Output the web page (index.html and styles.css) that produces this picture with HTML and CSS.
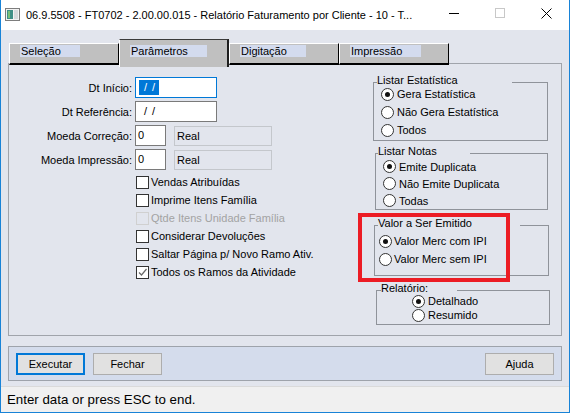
FILE: index.html
```html
<!DOCTYPE html>
<html lang="pt-BR">
<head>
    <meta charset="UTF-8">
    <title>Relatório Faturamento por Cliente</title>
    <link rel="stylesheet" href="styles.css">
</head>
<body>
    <div class="window">
        <div class="titlebar">
            <svg class="app-icon" width="15" height="13" viewBox="0 0 15 13">
                <rect x="0.5" y="0.5" width="14" height="12" fill="#f2f2f2" stroke="#7d7d7d"/>
                <rect x="2" y="2" width="6" height="9" fill="#3f8f86"/>
                <rect x="3" y="3" width="2" height="7" fill="#79bf78"/>
                <rect x="9" y="2" width="4" height="9" fill="#d6d9dc"/>
            </svg>
            <span class="title">06.9.5508 - FT0702 - 2.00.00.015 - Relatório Faturamento por Cliente - 10 - T...</span>
            <div class="caption-buttons">
                <div class="caption"><svg width="10" height="10" viewBox="0 0 10 10"><path d="M0 5.5h10" stroke="#000"/></svg></div>
                <div class="caption"><svg width="10" height="10" viewBox="0 0 10 10"><rect x="0.5" y="0.5" width="9" height="9" fill="none" stroke="#c8c8c8"/></svg></div>
                <div class="caption"><svg width="11" height="11" viewBox="0 0 11 11"><path d="M0.5 0.5l10 10M10.5 0.5l-10 10" stroke="#000"/></svg></div>
            </div>
        </div>

        <div class="client">
            <div class="tabs">
                <div class="tab"><span>Seleção</span></div>
                <div class="tab active"><span>Parâmetros</span></div>
                <div class="tab"><span>Digitação</span></div>
                <div class="tab"><span>Impressão</span></div>
            </div>

            <div class="panel">
                <div class="form">
                    <div class="field-row">
                        <label>Dt Início:</label>
                        <div class="input date focused"><span class="sel">/ /</span></div>
                    </div>
                    <div class="field-row">
                        <label>Dt Referência:</label>
                        <div class="input date"><span class="mask">/ /</span></div>
                    </div>
                    <div class="field-row">
                        <label>Moeda Correção:</label>
                        <div class="input code">0</div>
                        <div class="readonly">Real</div>
                    </div>
                    <div class="field-row">
                        <label>Moeda Impressão:</label>
                        <div class="input code">0</div>
                        <div class="readonly">Real</div>
                    </div>

                    <div class="checks">
                        <div class="check-item"><span class="box"></span>Vendas Atribuídas</div>
                        <div class="check-item"><span class="box"></span>Imprime Itens Família</div>
                        <div class="check-item disabled"><span class="box"></span>Qtde Itens Unidade Família</div>
                        <div class="check-item"><span class="box"></span>Considerar Devoluções</div>
                        <div class="check-item"><span class="box"></span>Saltar Página p/ Novo Ramo Ativ.</div>
                        <div class="check-item"><span class="box"><svg width="11" height="11" viewBox="0 0 11 11"><path d="M2 5.5l2.5 2.5 5-6" fill="none" stroke="#6a6a6a" stroke-width="1.2"/></svg></span>Todos os Ramos da Atividade</div>
                    </div>
                </div>

                <div class="side">
                    <fieldset class="group g-stat">
                        <legend>Listar Estatística</legend>
                        <div class="opts">
                            <div class="opt"><span class="radio on"></span>Gera Estatística</div>
                            <div class="opt"><span class="radio"></span>Não Gera Estatística</div>
                            <div class="opt"><span class="radio"></span>Todos</div>
                        </div>
                    </fieldset>
                    <fieldset class="group g-notas">
                        <legend>Listar Notas</legend>
                        <div class="opts">
                            <div class="opt"><span class="radio on"></span>Emite Duplicata</div>
                            <div class="opt"><span class="radio"></span>Não Emite Duplicata</div>
                            <div class="opt"><span class="radio"></span>Todas</div>
                        </div>
                    </fieldset>
                    <fieldset class="group g-valor">
                        <legend>Valor a Ser Emitido</legend>
                        <div class="opts">
                            <div class="opt"><span class="radio on"></span>Valor Merc com IPI</div>
                            <div class="opt"><span class="radio"></span>Valor Merc sem IPI</div>
                        </div>
                    </fieldset>
                    <fieldset class="group g-rel">
                        <legend>Relatório:</legend>
                        <div class="opts">
                            <div class="opt"><span class="radio on"></span>Detalhado</div>
                            <div class="opt"><span class="radio"></span>Resumido</div>
                        </div>
                    </fieldset>
                </div>

                <div class="highlight"></div>
            </div>

            <div class="buttonbar">
                <button class="btn default">Executar</button>
                <button class="btn">Fechar</button>
                <button class="btn help">Ajuda</button>
            </div>
        </div>

        <div class="statusbar">Enter data or press ESC to end.</div>
    </div>
</body>
</html>
```

FILE: styles.css
```css
body {
    margin: 0;
    font-family: "Liberation Sans", Arial, sans-serif;
    font-size: 11px;
    color: #000;
    background: #fff;
}

.window {
    width: 570px;
    height: 413px;
    box-sizing: border-box;
    border: 1px solid #1883d7;
    border-top: none;
    display: flex;
    flex-direction: column;
    background: #e2e5ed;
}

/* title bar */
.titlebar {
    height: 30px;
    flex-shrink: 0;
    background: #fff;
    display: flex;
    align-items: center;
}

.app-icon {
    margin-left: 4px;
    margin-top: -2px;
}

.title {
    margin-left: 6px;
    white-space: nowrap;
    flex: 1;
    margin-top: -1px;
}

.caption-buttons {
    display: flex;
    align-self: flex-start;
}

.caption {
    width: 46px;
    height: 26px;
    display: flex;
    align-items: center;
    justify-content: center;
}

/* client area */
.client {
    padding: 9px 7px 0;
    height: 351px;
}

.tabs {
    display: flex;
    height: 24px;
    position: relative;
    z-index: 1;
}

.tab {
    width: 110px;
    height: 22px;
    margin-top: 4px;
    box-sizing: border-box;
    background: #c0c0c0;
    border-top: 1px solid #fff;
    border-left: 1px solid #fff;
    border-right: 1px solid #000;
    border-bottom: 2px solid #000;
    padding: 1px 0 0 10px;
    white-space: nowrap;
}

.tab:first-child {
    margin-left: 1px;
}

.tab.active {
    margin-top: 0;
    height: 28px;
    border-top: 1px solid #3a3a3a;
    border-right: 2px solid #1e1e1e;
    border-bottom: none;
    padding-top: 5px;
}

.tab span {
    display: inline-block;
    line-height: 12px;
    background: #d3dbee;
    padding: 0 19px 0 1px;
}

.panel {
    position: relative;
    height: 273px;
    box-sizing: border-box;
    border: 1px solid #a0a4ab;
    display: flex;
}

/* left form */
.form {
    width: 356px;
    padding-top: 13px;
}

.field-row {
    display: flex;
    align-items: center;
    height: 21px;
    margin-bottom: 3px;
}

.field-row label {
    width: 123px;
    margin-right: 3px;
    text-align: right;
    white-space: nowrap;
}

.input {
    height: 21px;
    box-sizing: border-box;
    border: 1px solid #7a7a7a;
    background: #fff;
    padding-left: 2px;
    line-height: 19px;
    white-space: pre;
    overflow: hidden;
}

.input.date {
    width: 82px;
}

.input.focused {
    border-color: #0078d7;
    padding-left: 3px;
}

.input.code {
    width: 31px;
}

.sel {
    display: inline-block;
    width: 20px;
    height: 15px;
    line-height: 15px;
    margin-top: 2px;
    vertical-align: top;
    box-sizing: border-box;
    padding-left: 5px;
    letter-spacing: 1px;
    background: #0078d7;
    color: #fff;
}

.mask {
    padding-left: 6px;
    letter-spacing: 1px;
}

.readonly {
    width: 98px;
    height: 20px;
    margin-left: 8px;
    box-sizing: border-box;
    border: 1px solid #c4c7cc;
    background: #e2e5ed;
    padding-left: 2px;
    line-height: 18px;
}

.checks {
    padding-left: 127px;
}

.check-item {
    display: flex;
    align-items: center;
    height: 18px;
    white-space: nowrap;
}

.box {
    width: 13px;
    height: 13px;
    box-sizing: border-box;
    border: 1px solid #333;
    background: #fff;
    margin-right: 2px;
    display: flex;
    align-items: center;
    justify-content: center;
}

.check-item.disabled {
    color: #a3a3a3;
}

.check-item.disabled .box {
    border-color: #d0d0d0;
    background: transparent;
}

/* right side groups */
.side {
    width: 178px;
    margin-left: 8px;
    padding-top: 9px;
}

.group {
    margin: 0;
    padding: 0;
    min-width: 0;
    border: 1px solid #8f939a;
}

.group legend {
    padding: 0 0 4px 0;
    line-height: 14px;
    box-sizing: border-box;
    white-space: nowrap;
}

.opt {
    display: flex;
    align-items: center;
    height: 18px;
    white-space: nowrap;
}

.radio {
    width: 13px;
    height: 13px;
    box-sizing: border-box;
    border: 1px solid #333;
    border-radius: 50%;
    background: #fff;
    margin-right: 3px;
    display: flex;
    align-items: center;
    justify-content: center;
}

.radio.on::after {
    content: "";
    width: 5px;
    height: 5px;
    border-radius: 50%;
    background: #111;
}

.g-stat {
    width: 173px;
    padding-bottom: 1px;
}

.g-stat legend {
    margin-left: 3px;
    width: 135px;
}

.g-stat .opts {
    margin-top: -6px;
    padding-left: 7px;
}

.g-notas {
    width: 171px;
    margin: 3px 0 0 2px;
}

.g-notas legend {
    margin-left: 2px;
    width: 92px;
}

.g-notas .opts {
    margin-top: -4px;
    padding-left: 7px;
}

.g-notas .opt {
    height: 17px;
}

.g-valor {
    width: 173px;
    margin: 6px 0 0 1px;
    padding-bottom: 7px;
}

.g-valor legend {
    margin-left: 3px;
    width: 142px;
}

.g-valor .opts {
    margin-top: -2px;
    padding-left: 4px;
}

.g-valor .radio {
    margin-right: 2px;
}

.g-rel {
    width: 172px;
    margin: 5px 0 0 3px;
    padding-bottom: 2px;
}

.g-rel legend {
    margin-left: 4px;
    width: 76px;
}

.g-rel .opts {
    margin-top: -5px;
    padding-left: 35px;
}

.g-rel .opt {
    height: 14px;
}

.highlight {
    position: absolute;
    left: 349px;
    top: 149px;
    width: 152px;
    height: 69px;
    box-sizing: border-box;
    border: 4px solid #ec1c24;
}

/* bottom buttons */
.buttonbar {
    margin-top: 10px;
    height: 35px;
    box-sizing: border-box;
    border: 1px solid #9ea3ab;
    background: #d4dcec;
    display: flex;
    align-items: center;
    padding: 0 7px;
}

.btn {
    width: 69px;
    height: 22px;
    box-sizing: border-box;
    border: 1px solid #adadad;
    background: #e1e1e1;
    font-family: inherit;
    font-size: 11px;
    color: #000;
    padding: 0;
    margin-right: 8px;
}

.btn.default {
    border: 2px solid #0078d7;
}

.btn.help {
    margin-left: auto;
    margin-right: 0;
}

.statusbar {
    margin-top: 5px;
    height: 26px;
    box-sizing: border-box;
    border-top: 1px solid #dadada;
    background: #f0f0f0;
    padding-left: 6px;
    font-size: 13.3px;
    line-height: 25px;
}
```
